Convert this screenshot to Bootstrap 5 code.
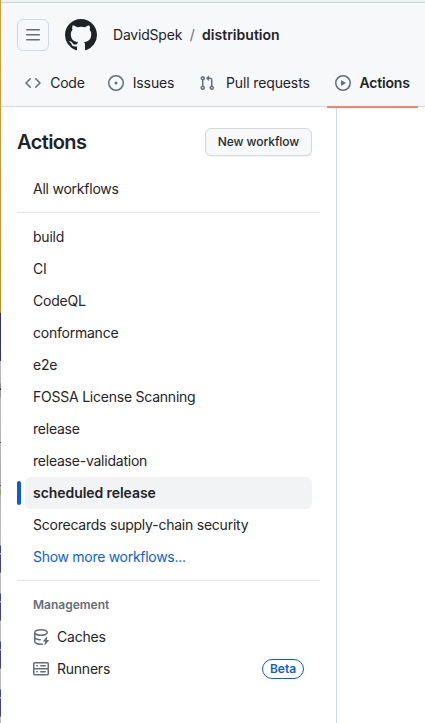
<!DOCTYPE html>
<html lang="en">
<head>
<meta charset="utf-8">
<meta name="viewport" content="width=device-width, initial-scale=1">
<title>Actions · DavidSpek/distribution</title>
<link href="https://cdn.jsdelivr.net/npm/bootstrap@5.3.0/dist/css/bootstrap.min.css" rel="stylesheet">
<style>
  body { font-family: Inter, "Liberation Sans", sans-serif; font-size: 14px; line-height: 20px; color: #1f2328; background: #fff; overflow: hidden; }
  svg { display: block; flex: none; fill: currentColor; }
  a { color: inherit; text-decoration: none; }
  .shell { height: 723px; }
  /* sliver of the desktop behind the window */
  .edge { width: 1px; flex: none; background: linear-gradient(#d2a03a 0, #cb9430 230px, #c48a1c 313px, #2f2f73 313px, #33337c 361px, #bdbdbd 361px, #b4b4b4 383px, #8c8c8c 384px, #8c8c8c 388px, #222 389px, #222 390px, #999 390px, #999 397px, #bdbdbd 398px, #b4b4b4 442px, #555 442px, #555 443px, #b8b8b8 443px, #a8a8a8 485px, #555 485px, #555 486px, #aaa 486px, #aaa 490px, #85ad62 490px, #85ad62 495px, #b4b4b4 495px, #c2c0bd 545px, #40409c 546px, #40409c 553px, #b9b9e6 553px, #b9b9e6 554px, #40409c 555px, #40409c 572px, #bcbab8 573px, #bcbab8 593px, #40409c 594px, #40409c 601px, #b9b9e6 601px, #b9b9e6 602px, #40409c 603px, #40409c 620px, #bcbab8 621px, #bcbab8 641px, #40409c 642px, #40409c 649px, #b9b9e6 649px, #b9b9e6 650px, #40409c 651px, #40409c 668px, #bcbab8 669px, #bcbab8 689px, #40409c 690px, #40409c 697px, #b9b9e6 697px, #b9b9e6 698px, #40409c 699px, #40409c 716px, #bcbab8 717px); }
  .window-top { height: 3px; background: #f0f1f1; border-bottom: 1px solid #ced5d9; }
  .site-header { height: 104px; background: #f6f8fa; border-bottom: 1px solid #d0d7de; }
  .menu-btn { width: 32px; height: 32px; border: 1px solid #d0d7de; border-radius: 6px; color: #656d76; background: transparent; }
  .crumbs { padding: 16px 16px 0; }
  .owner { letter-spacing: -.2px; }
  .slash { padding: 0 7.3px 0 7.5px; color: #656d76; }
  .repo { letter-spacing: .02px; }
  .tabs { height: 48px; padding: 0 0 0 16px; margin-top: 8px; }
  .tab-link { padding: 0 8px; height: 48px; margin-right: 8.5px; position: relative; white-space: nowrap; letter-spacing: -.13px; }
  .tab-link svg { color: #656d76; margin-right: 9.2px; }
  .tab-link.code { letter-spacing: -.25px; margin-right: 7px; }
  .tab-link.pulls { margin-right: 9.5px; }
  .tab-link.pulls svg { margin-right: 11.2px; }
  .tab-link.current { letter-spacing: -.2px; }
  .tab-link.current svg { margin-right: 8.3px; }
  .tab-link.current::after { content: ""; position: absolute; left: 0; right: 0; bottom: -1px; height: 2px; background: #fd8068; }
  .side { width: 336px; flex: none; border-right: 1px solid #d0d7de; padding: 21px 16px 0; }
  .side h1 { font-size: 20px; line-height: 28px; font-weight: 600; letter-spacing: -.6px; }
  .new-btn { font-size: 12px; font-weight: 500; line-height: 20px; height: 28px; width: 107px; padding: 3px 0; color: #24292f; background: #f6f8fa; border: 1px solid #d4d8dc; border-radius: 6px; box-shadow: 0 1px 0 rgba(31,35,40,.04); white-space: nowrap; letter-spacing: -.07px; }
  .side-nav { padding-top: 17px; }
  .item { height: 32px; padding: 0 8px; margin: 0 8px; border-radius: 6px; position: relative; white-space: nowrap; letter-spacing: -.23px; }
  .item svg { color: #656d76; margin-right: 8px; }
  .item.current { background: #f2f3f5; font-weight: 600; letter-spacing: -.06px; }
  .item.current::before { content: ""; position: absolute; left: -8px; top: 4px; width: 4px; height: 24px; border-radius: 2px; background: #0b5bd7; }
  .rule { height: 1px; margin: 7px 0 8px; background: #e1e4e8; }
  .item.blue { color: #0b5fdc; letter-spacing: -.29px; }
  .group-title { font-size: 12px; line-height: 18px; font-weight: 600; color: #656d76; padding: 7px 16px; }
  .beta { font-size: 12px; line-height: 18px; font-weight: 600; color: #0b5bd7; border: 1px solid #0b5bd7; border-radius: 10px; width: 42px; height: 20px; text-align: center; letter-spacing: 0; }
</style>
</head>
<body>
<div class="shell d-flex">
  <div class="edge"></div>
  <div class="flex-grow-1 d-flex flex-column">
    <div class="window-top"></div>
    <header class="site-header">
      <div class="crumbs d-flex align-items-center">
        <button class="menu-btn d-flex align-items-center justify-content-center p-0" aria-label="Menu">
          <svg width="16" height="16" viewBox="0 0 16 16"><path d="M1 2.75A.75.75 0 0 1 1.75 2h12.5a.75.75 0 0 1 0 1.5H1.75A.75.75 0 0 1 1 2.75Zm0 5A.75.75 0 0 1 1.75 7h12.5a.75.75 0 0 1 0 1.5H1.75A.75.75 0 0 1 1 7.75ZM1.75 12h12.5a.75.75 0 0 1 0 1.5H1.75a.75.75 0 0 1 0-1.5Z"/></svg>
        </button>
        <a href="#" class="mx-3" aria-label="Home">
          <svg width="32" height="32" viewBox="0 0 16 16"><path d="M8 0c4.42 0 8 3.58 8 8a8.013 8.013 0 0 1-5.45 7.59c-.4.08-.55-.17-.55-.38 0-.27.01-1.13.01-2.2 0-.75-.25-1.23-.54-1.48 1.78-.2 3.65-.88 3.65-3.95 0-.88-.31-1.59-.82-2.15.08-.2.36-1.02-.08-2.12 0 0-.67-.22-2.2.82-.64-.18-1.32-.27-2-.27-.68 0-1.36.09-2 .27-1.53-1.03-2.2-.82-2.2-.82-.44 1.1-.16 1.92-.08 2.12-.51.56-.82 1.28-.82 2.15 0 3.06 1.86 3.75 3.64 3.95-.23.2-.44.55-.51 1.07-.46.21-1.61.55-2.33-.66-.15-.24-.6-.83-1.23-.82-.67.01-.27.38.01.53.34.19.73.9.82 1.13.16.45.68 1.31 2.69.94 0 .67.01 1.3.01 1.49 0 .21-.15.45-.55.38A7.995 7.995 0 0 1 0 8c0-4.42 3.58-8 8-8Z"/></svg>
        </a>
        <a href="#" class="owner">DavidSpek</a><span class="slash">/</span><a href="#" class="repo fw-semibold">distribution</a>
      </div>
      <nav class="tabs d-flex">
        <a href="#" class="tab-link code d-flex align-items-center"><svg width="16" height="16" viewBox="0 0 16 16"><path d="m11.28 3.22 4.25 4.25a.75.75 0 0 1 0 1.06l-4.25 4.25a.749.749 0 0 1-1.275-.326.749.749 0 0 1 .215-.734L13.94 8l-3.72-3.72a.749.749 0 0 1 .326-1.275.749.749 0 0 1 .734.215Zm-6.56 0a.751.751 0 0 1 1.042.018.751.751 0 0 1 .018 1.042L2.06 8l3.72 3.72a.749.749 0 0 1-.326 1.275.749.749 0 0 1-.734-.215L.47 8.53a.75.75 0 0 1 0-1.06Z"/></svg>Code</a>
        <a href="#" class="tab-link d-flex align-items-center"><svg width="16" height="16" viewBox="0 0 16 16"><path d="M8 9.5a1.5 1.5 0 1 0 0-3 1.5 1.5 0 0 0 0 3Z"/><path d="M8 0a8 8 0 1 1 0 16A8 8 0 0 1 8 0ZM1.5 8a6.5 6.5 0 1 0 13 0 6.5 6.5 0 0 0-13 0Z"/></svg>Issues</a>
        <a href="#" class="tab-link pulls d-flex align-items-center"><svg width="16" height="16" viewBox="0 0 16 16"><path d="M1.5 3.25a2.25 2.25 0 1 1 3 2.122v5.256a2.251 2.251 0 1 1-1.5 0V5.372A2.25 2.25 0 0 1 1.5 3.25Zm5.677-.177L9.573.677A.25.25 0 0 1 10 .854V2.5h1A2.5 2.5 0 0 1 13.5 5v5.628a2.251 2.251 0 1 1-1.5 0V5a1 1 0 0 0-1-1h-1v1.646a.25.25 0 0 1-.427.177L7.177 3.427a.25.25 0 0 1 0-.354ZM3.75 2.5a.75.75 0 1 0 0 1.5.75.75 0 0 0 0-1.5Zm0 9.5a.75.75 0 1 0 0 1.5.75.75 0 0 0 0-1.5Zm8.25.75a.75.75 0 1 0 1.5 0 .75.75 0 0 0-1.5 0Z"/></svg>Pull requests</a>
        <a href="#" class="tab-link current fw-semibold d-flex align-items-center"><svg width="16" height="16" viewBox="0 0 16 16"><path d="M8 0a8 8 0 1 1 0 16A8 8 0 0 1 8 0ZM1.5 8a6.5 6.5 0 1 0 13 0 6.5 6.5 0 0 0-13 0Zm4.879-2.773 4.264 2.559a.25.25 0 0 1 0 .428l-4.264 2.559A.25.25 0 0 1 6 10.559V5.442a.25.25 0 0 1 .379-.215Z"/></svg>Actions</a>
      </nav>
    </header>
    <div class="d-flex flex-grow-1">
      <aside class="side">
        <div class="d-flex justify-content-between align-items-center me-2">
          <h1 class="mb-0">Actions</h1>
          <button class="new-btn">New workflow</button>
        </div>
        <nav class="side-nav">
          <a href="#" class="item d-flex align-items-center">All workflows</a>
          <div class="rule"></div>
          <a href="#" class="item d-flex align-items-center">build</a>
          <a href="#" class="item d-flex align-items-center">CI</a>
          <a href="#" class="item d-flex align-items-center">CodeQL</a>
          <a href="#" class="item d-flex align-items-center">conformance</a>
          <a href="#" class="item d-flex align-items-center">e2e</a>
          <a href="#" class="item d-flex align-items-center">FOSSA License Scanning</a>
          <a href="#" class="item d-flex align-items-center">release</a>
          <a href="#" class="item d-flex align-items-center">release-validation</a>
          <a href="#" class="item current d-flex align-items-center">scheduled release</a>
          <a href="#" class="item d-flex align-items-center">Scorecards supply-chain security</a>
          <a href="#" class="item blue d-flex align-items-center">Show more workflows...</a>
          <div class="rule"></div>
          <div class="group-title">Management</div>
          <a href="#" class="item d-flex align-items-center"><svg width="16" height="16" viewBox="0 0 16 16"><path d="M2.5 5.724V8c0 .248.238.7 1.169 1.159.874.43 2.144.745 3.62.822a.75.75 0 1 1-.078 1.498c-1.622-.085-3.102-.432-4.204-.975a5.565 5.565 0 0 1-.507-.28V12.5c0 .133.058.318.282.551.227.237.591.483 1.101.707 1.015.447 2.47.742 4.117.742.406 0 .802-.018 1.183-.052a.751.751 0 1 1 .134 1.494C8.89 15.98 8.45 16 8 16c-1.805 0-3.475-.32-4.721-.869-.623-.274-1.173-.619-1.579-1.041-.408-.425-.7-.964-.7-1.59v-9c0-.626.292-1.165.7-1.591.406-.42.956-.766 1.579-1.04C4.525.32 6.195 0 8 0c1.806 0 3.476.32 4.721.869.623.274 1.173.619 1.579 1.041.408.425.7.964.7 1.59 0 .626-.292 1.165-.7 1.591-.406.42-.956.766-1.578 1.04C11.475 6.68 9.805 7 8 7c-1.805 0-3.475-.32-4.721-.869a6.15 6.15 0 0 1-.779-.407Zm0-2.224c0 .133.058.318.282.551.227.237.591.483 1.101.707C4.898 5.205 6.353 5.5 8 5.5c1.646 0 3.101-.295 4.118-.742.508-.224.873-.471 1.1-.708.224-.232.282-.417.282-.55 0-.133-.058-.318-.282-.551-.227-.237-.591-.483-1.101-.707C11.102 1.795 9.647 1.5 8 1.5c-1.646 0-3.101.295-4.118.742-.508.224-.873.471-1.1.708-.224.232-.282.417-.282.55Zm11.49 4.161a.38.38 0 0 1 .319.449L13.7 11h1.93a.37.37 0 0 1 .29.6l-3.74 4.3a.38.38 0 0 1-.65-.33l.6-3.07H10.37a.37.37 0 0 1-.28-.61l3.5-4.1a.38.38 0 0 1 .4-.129Z"/></svg>Caches</a>
          <a href="#" class="item d-flex align-items-center"><svg width="16" height="16" viewBox="0 0 16 16"><path d="M1.75 1h12.5c.966 0 1.75.784 1.75 1.75v4c0 .372-.116.717-.314 1 .198.283.314.628.314 1v4a1.75 1.75 0 0 1-1.75 1.75H1.75A1.75 1.75 0 0 1 0 12.75v-4c0-.358.109-.707.314-1a1.739 1.739 0 0 1-.314-1v-4C0 1.784.784 1 1.75 1ZM1.5 2.75v4c0 .138.112.25.25.25h12.5a.25.25 0 0 0 .25-.25v-4a.25.25 0 0 0-.25-.25H1.75a.25.25 0 0 0-.25.25Zm.25 5.75a.25.25 0 0 0-.25.25v4c0 .138.112.25.25.25h12.5a.25.25 0 0 0 .25-.25v-4a.25.25 0 0 0-.25-.25ZM7 4.75A.75.75 0 0 1 7.75 4h4.5a.75.75 0 0 1 0 1.5h-4.5A.75.75 0 0 1 7 4.75ZM7.75 10h4.5a.75.75 0 0 1 0 1.5h-4.5a.75.75 0 0 1 0-1.5ZM3 4.75A.75.75 0 0 1 3.75 4h.5a.75.75 0 0 1 0 1.5h-.5A.75.75 0 0 1 3 4.75ZM3.75 10h.5a.75.75 0 0 1 0 1.5h-.5a.75.75 0 0 1 0-1.5Z"/></svg>Runners<span class="beta ms-auto">Beta</span></a>
        </nav>
      </aside>
      <main class="flex-grow-1"></main>
    </div>
  </div>
</div>
<script src="https://cdn.jsdelivr.net/npm/bootstrap@5.3.0/dist/js/bootstrap.bundle.min.js"></script>
</body>
</html>
